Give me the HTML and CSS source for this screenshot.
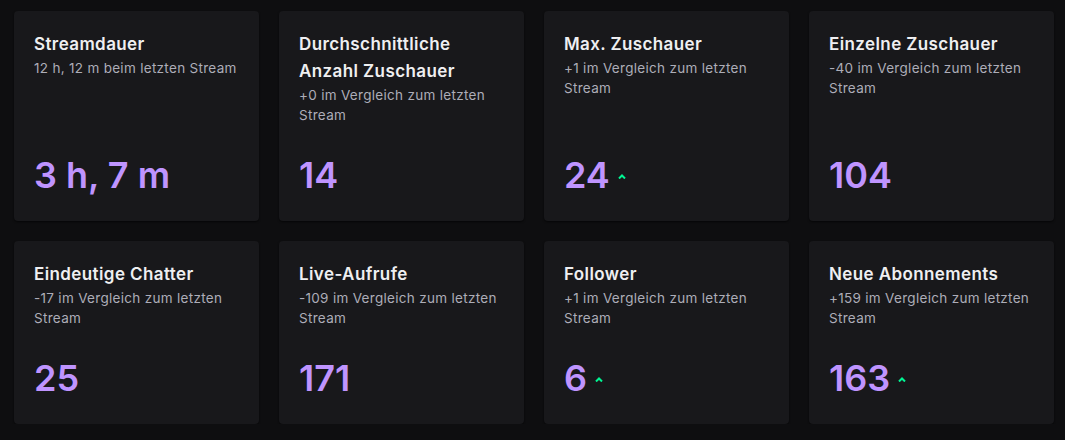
FILE: index.html
```html
<!DOCTYPE html>
<html lang="de">
<head>
<meta charset="utf-8">
<link rel="stylesheet" href="styles.css">
</head>
<body>
<main class="grid">
  <section class="card">
    <h3 class="title">Streamdauer</h3>
    <p class="sub">12 h, 12 m beim letzten Stream</p>
    <div class="value">3 h, 7 m</div>
  </section>
  <section class="card">
    <h3 class="title">Durchschnittliche Anzahl Zuschauer</h3>
    <p class="sub">+0 im Vergleich zum letzten Stream</p>
    <div class="value">14</div>
  </section>
  <section class="card">
    <h3 class="title">Max. Zuschauer</h3>
    <p class="sub">+1 im Vergleich zum letzten Stream</p>
    <div class="value">24<svg class="up" viewBox="0 0 8 5" width="8" height="5"><path d="M1 4.5 L4 1.5 L7 4.5" fill="none" stroke="#00f593" stroke-width="2"/></svg></div>
  </section>
  <section class="card">
    <h3 class="title">Einzelne Zuschauer</h3>
    <p class="sub">-40 im Vergleich zum letzten Stream</p>
    <div class="value">104</div>
  </section>
  <section class="card">
    <h3 class="title">Eindeutige Chatter</h3>
    <p class="sub">-17 im Vergleich zum letzten Stream</p>
    <div class="value">25</div>
  </section>
  <section class="card">
    <h3 class="title">Live-Aufrufe</h3>
    <p class="sub">-109 im Vergleich zum letzten Stream</p>
    <div class="value">171</div>
  </section>
  <section class="card">
    <h3 class="title">Follower</h3>
    <p class="sub">+1 im Vergleich zum letzten Stream</p>
    <div class="value">6<svg class="up" viewBox="0 0 8 5" width="8" height="5"><path d="M1 4.5 L4 1.5 L7 4.5" fill="none" stroke="#00f593" stroke-width="2"/></svg></div>
  </section>
  <section class="card">
    <h3 class="title">Neue Abonnements</h3>
    <p class="sub">+159 im Vergleich zum letzten Stream</p>
    <div class="value">163<svg class="up" viewBox="0 0 8 5" width="8" height="5"><path d="M1 4.5 L4 1.5 L7 4.5" fill="none" stroke="#00f593" stroke-width="2"/></svg></div>
  </section>
</main>
</body>
</html>
```

FILE: styles.css
```css
html, body {
  margin: 0;
  background: #0e0e10;
}
body {
  font-family: Inter, "Noto Sans", "Liberation Sans", sans-serif;
  color: #efeff1;
}
.grid {
  display: grid;
  grid-template-columns: repeat(4, 245px);
  column-gap: 20px;
  row-gap: 20px;
  padding: 11px 10px 0 14px;
}
.card {
  background: #18181b;
  border-radius: 4px;
  box-shadow: 0 1px 2px rgba(0, 0, 0, 0.6);
  padding: 20px 20px 20px 20px;
  display: flex;
  flex-direction: column;
}
.title {
  margin: 0;
  font-size: 17px;
  letter-spacing: 0.4px;
  font-weight: 600;
  line-height: 27px;
  color: #efeff1;
}
.sub {
  margin: 0;
  font-size: 13.5px;
  letter-spacing: 0.3px;
  line-height: 20px;
  color: #adadb8;
}
.value {
  margin-top: auto;
  padding-top: 24px;
  font-size: 36px;
  font-weight: 600;
  line-height: 52px;
  color: #bf94ff;
  display: flex;
  align-items: baseline;
}
.up {
  margin-left: 8px;
  align-self: center;
  margin-top: 2px;
}
```
